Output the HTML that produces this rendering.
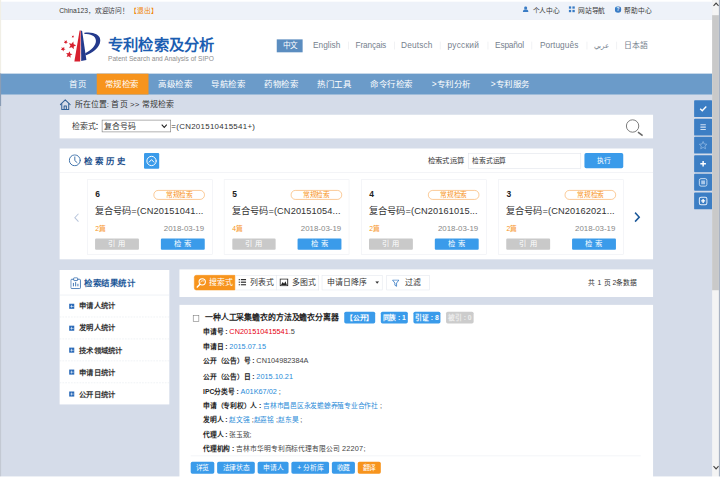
<!DOCTYPE html>
<html lang="zh-CN">
<head>
<meta charset="utf-8">
<title>专利检索及分析</title>
<style>
*{box-sizing:border-box;margin:0;padding:0}
html,body{width:720px;height:478px;overflow:hidden;background:#d5dce9}
body{font-family:"Liberation Sans",sans-serif;color:#333}
#stage{position:absolute;left:0;top:0;width:1280px;height:850px;transform:scale(0.5625);transform-origin:0 0;background:#d5dce9;overflow:hidden;font-size:14px}
.abs{position:absolute}
.t{position:absolute;white-space:nowrap}
#topbar{left:0;top:0;width:1266px;height:35px;background:#eef2f9;border-top:3px solid #fff}
#topbar .t{font-size:12px;line-height:20px;top:5.8px;color:#3a3a3a}
#header{left:0;top:35px;width:1266px;height:96px;background:#fff}
#title{left:192px;top:60.5px;font-size:27.2px;font-weight:bold;color:#1b5db1;line-height:36px}
#subtitle{left:192px;top:97px;font-size:11.75px;color:#8e8e8e;line-height:14px}
.lang{position:absolute;top:70px;font-size:14px;color:#76818e;white-space:nowrap;line-height:23px}
.lang.on{background:#5b8dc0;color:#fff;left:492.4px;top:69.5px;width:46px;height:23.4px;line-height:24.4px;text-align:center;font-size:13.5px}
.lsep{position:absolute;top:74px;width:1px;height:14px;background:#e6e8ec}
#nav{left:0;top:131px;width:1266px;height:36.5px;background:#6b9bc9}
#nav span{position:absolute;top:0;height:36.5px;line-height:36.5px;color:#fff;font-size:15px;white-space:nowrap}
#nav i{position:absolute;top:0;left:171.6px;width:92.8px;height:36.5px;background:#f7941d}
#crumb{left:132.6px;top:175px;font-size:14px;letter-spacing:0.3px;color:#333;line-height:22px}
#sbox{left:105.8px;top:204px;width:1055.4px;height:41.8px;background:#fff}
#hist{left:105.8px;top:263.8px;width:1055.4px;height:197.5px;background:#fff}
.card{position:absolute;top:54.9px;width:223.1px;height:134.7px;border:1px solid #eceef2;background:#fff}
.card .n{position:absolute;left:13.5px;top:16px;font-size:15px;font-weight:bold;color:#222;line-height:20px}
.card .pill{position:absolute;left:117.7px;top:18.6px;width:91px;height:16.4px;border:1px solid #f7a24a;border-radius:8.2px;color:#f7941d;font-size:12px;line-height:14.4px;text-align:center}
.card .q{position:absolute;left:13px;top:43.6px;font-size:16.4px;letter-spacing:0.2px;color:#333;white-space:nowrap;line-height:24px}
.card .c{position:absolute;left:13.5px;top:77.6px;font-size:12px;color:#f7941d;line-height:18px}
.card .d{position:absolute;right:14px;top:77.6px;font-size:14px;color:#888;line-height:18px}
.card .b1,.card .b2{position:absolute;top:103.9px;width:77.8px;height:20.9px;color:#fff;font-size:13px;line-height:20.9px;text-align:center;letter-spacing:5px;text-indent:5px;border-radius:2px}
.card .b1{left:13.2px;background:#c9c9c9}
.card .b2{left:130.1px;background:#3a9bea}
#side{left:105.6px;top:479.6px;width:195.2px;height:239.9px;background:#fff}
#side .h{position:absolute;left:0;top:0;width:195.2px;height:45.3px;border-bottom:1px solid #e3e7ee}
#side .h span{position:absolute;left:44.6px;top:12.5px;font-size:15px;font-weight:bold;color:#1e5a9a;white-space:nowrap;line-height:22px}
#side .it{position:absolute;left:0;width:195.2px;height:39.1px;border-bottom:1px dashed #e3e7ee}
#side .it i{position:absolute;left:17.8px;top:15px;width:9px;height:9px;background:#2a6ab8}
#side .it i:before{content:"";position:absolute;left:1.8px;top:3.9px;width:5.4px;height:1.2px;background:#fff}
#side .it i:after{content:"";position:absolute;left:3.9px;top:1.8px;width:1.2px;height:5.4px;background:#fff}
#side .it span{position:absolute;left:34.7px;top:9.5px;font-size:13px;font-weight:bold;color:#333;white-space:nowrap;line-height:20px}
#tool{left:318.8px;top:479.1px;width:842.4px;height:48.9px;background:#fff}
#tool .b{position:absolute;top:9.8px;height:27.4px;border:1px solid #e3e7ee;font-size:14px;line-height:25.4px;white-space:nowrap;color:#333}
#res{left:318.8px;top:541.7px;width:842.4px;height:320px;background:#fff}
.tag{position:absolute;top:12.4px;height:20.8px;line-height:20.8px;color:#fff;font-size:12px;font-weight:bold;background:#3a9bea;border-radius:3px;text-align:center;white-space:nowrap}
.row{position:absolute;left:42.3px;font-size:13px;color:#444;white-space:nowrap;line-height:26px}
.row b{font-weight:bold;color:#222;font-size:12px}
.row a{color:#2a8bd8;text-decoration:none}
.row a.c{font-size:12px}
.btn{position:absolute;top:279.6px;height:20.8px;line-height:20.8px;color:#fff;background:#3a9bea;border-radius:3px;font-size:12px;text-align:center;white-space:nowrap}
#float div{position:absolute;left:0;width:31.5px;height:30px;background:#3c7ec4;border-radius:1.5px}
#float svg{position:absolute;left:0;top:0}
#sbar{left:1265.8px;top:0;width:14.2px;height:850px;background:#f4f4f4}
</style>
</head>
<body>
<div id="stage">
<div class="abs" id="topbar">
  <div class="t" style="left:105.2px">China123，欢迎访问！ <span style="color:#f08300">【退出】</span></div>
  <svg class="abs" style="left:928.5px;top:8px" width="11" height="11" viewBox="0 0 11 11"><circle cx="5.5" cy="3" r="2.7" fill="#3a7cc5"/><path d="M0.5,10.5 C0.5,7 2.5,6 5.5,6 C8.5,6 10.5,7 10.5,10.5 Z" fill="#3a7cc5"/></svg>
  <div class="t" style="left:946.7px">个人中心</div>
  <svg class="abs" style="left:1011px;top:8px" width="11" height="11" viewBox="0 0 11 11" fill="#3a7cc5"><rect x="0" y="0" width="4.4" height="4.4"/><rect x="6.6" y="0" width="4.4" height="4.4"/><rect x="0" y="6.6" width="4.4" height="4.4"/><rect x="6.6" y="6.6" width="4.4" height="4.4"/></svg>
  <div class="t" style="left:1027.6px">网站导航</div>
  <svg class="abs" style="left:1093px;top:8px" width="11.5" height="11.5" viewBox="0 0 12 12"><circle cx="6" cy="6" r="6" fill="#3a7cc5"/><text x="6" y="9.3" font-size="9" font-weight="bold" fill="#fff" text-anchor="middle" font-family="Liberation Sans">?</text></svg>
  <div class="t" style="left:1109.8px">帮助中心</div>
</div>
<div class="abs" id="header"></div>
<svg class="abs" style="left:97.8px;top:44.4px" width="88.9" height="71.1" viewBox="0 0 598 478">
<g fill="#d7202f"><polygon points="217.8,126.0 218.3,137.7 229.0,142.6 218.0,146.7 216.7,158.3 209.4,149.2 197.9,151.5 204.4,141.7 198.6,131.5 209.9,134.6"/><polygon points="141.0,184.5 138.7,202.2 153.4,212.4 135.8,215.7 130.7,232.9 122.2,217.1 104.2,217.6 116.6,204.6 110.6,187.7 126.8,195.4"/><polygon points="217.4,201.6 221.8,234.4 252.9,245.5 223.1,259.8 222.2,292.8 199.4,268.9 167.7,278.2 183.4,249.1 164.7,221.9 197.3,227.8"/><polygon points="110.0,264.0 107.3,284.5 124.3,296.2 104.0,300.0 98.1,319.8 88.2,301.7 67.6,302.2 81.8,287.2 74.9,267.7 93.6,276.6"/><polygon points="174.1,316.6 180.3,344.2 207.6,351.3 183.3,365.7 185.0,393.9 163.8,375.2 137.5,385.5 148.7,359.6 130.8,337.8 158.9,340.4"/><polygon points="293,70 306,70 300,440 230,440"/></g>
<g fill="#243a8c"><polygon points="309,70 323,74 374,420 312,432"/>
<path d="M350,96 C440,80 545,110 540,190 C535,280 440,335 362,368 L360,342 C430,300 490,250 488,190 C486,130 420,110 350,110 Z"/></g></svg>
<div class="t" id="title">专利检索及分析</div>
<div class="t" id="subtitle">Patent Search and Analysis of SIPO</div>
<div class="lang on">中文</div>
<div class="lang" style="left:556.4px;font-size:14.8px;letter-spacing:0px">English</div>
<div class="lang" style="left:632px;font-size:14.8px;letter-spacing:-0.29px">Français</div>
<div class="lang" style="left:713.1px;font-size:14.8px;letter-spacing:0.22px">Deutsch</div>
<div class="lang" style="left:795.7px;font-size:14.8px;letter-spacing:0.43px">русский</div>
<div class="lang" style="left:880px;font-size:14.8px;letter-spacing:-0.28px">Español</div>
<div class="lang" style="left:959.8px;font-size:14.8px;letter-spacing:0.12px">Português</div>
<div class="lang" style="left:1055.5px;font-size:12px">عربي</div>
<div class="lang" style="left:1109.7px">日本語</div>
<div class="lsep" style="left:619.2px"></div><div class="lsep" style="left:700.8px"></div><div class="lsep" style="left:782.2px"></div><div class="lsep" style="left:866.5px"></div><div class="lsep" style="left:945.2px"></div><div class="lsep" style="left:1043px"></div><div class="lsep" style="left:1095.6px"></div>
<div class="abs" id="nav"><i></i>
  <span style="left:122.8px">首页</span>
  <span style="left:186.5px">常规检索</span>
  <span style="left:281.4px">高级检索</span>
  <span style="left:375.8px">导航检索</span>
  <span style="left:469.7px">药物检索</span>
  <span style="left:564.1px">热门工具</span>
  <span style="left:658.5px">命令行检索</span>
  <span style="left:767.6px">&gt;专利分析</span>
  <span style="left:872.4px">&gt;专利服务</span>
</div>
<svg class="abs" style="left:106px;top:175.5px" width="20" height="20" viewBox="0 0 20 20" fill="none" stroke="#2f5f96" stroke-width="1.8" stroke-linejoin="round" stroke-linecap="round"><path d="M1.2,10 L10,1.5 L18.8,10"/><path d="M3.8,8.5 V18.5 H16.2 V8.5"/><path d="M8,18.5 V12.5 H12 V18.5"/></svg>
<div class="t" id="crumb">所在位置: 首页 &gt;&gt; 常规检索</div>
<div class="abs" id="sbox">
  <div class="t" style="left:21.8px;top:10px;font-size:14px;line-height:22px">检索式：</div>
  <div class="abs" style="left:75.5px;top:9.2px;width:122.7px;height:21.5px;border:1px solid #767676;font-size:14px;line-height:20.5px;padding-left:3px;background:#fff;white-space:nowrap">复合号码</div>
  <svg class="abs" style="left:180px;top:15.5px" width="12" height="9" viewBox="0 0 12 9" fill="none" stroke="#222" stroke-width="1.8"><path d="M1.5,1.5 L6,6.5 L10.5,1.5"/></svg>
  <div class="t" style="left:198.8px;top:10px;font-size:14px;letter-spacing:0.55px;line-height:22px">=(CN201510415541+)</div>
  <svg class="abs" style="left:1000px;top:4px" width="50" height="36" viewBox="0 0 50 36" fill="none" stroke="#777" stroke-width="1.7"><circle cx="18.6" cy="16" r="11"/><path d="M28.2,26.8 L36.4,33.2" stroke-width="2.6" stroke="#666"/></svg>
</div>
<div class="abs" id="hist">
  <svg class="abs" style="left:16px;top:10.5px" width="22" height="22" viewBox="0 0 22 22" fill="none" stroke="#3a6ea8" stroke-width="1.7" stroke-linecap="round"><circle cx="11" cy="11" r="9.7"/><path d="M11,5 V11.5 L15,15"/></svg>
  <div class="t" style="left:43px;top:11.3px;font-size:15px;font-weight:bold;color:#1d4f8c;letter-spacing:5px;line-height:24px">检索历史</div>
  <div class="abs" style="left:150.7px;top:8.2px;width:26.7px;height:28.4px;background:#3a9bea;border-radius:2px"></div>
  <svg class="abs" style="left:150.7px;top:8.2px" width="26.7" height="28.4" viewBox="0 0 26.7 28.4" fill="none" stroke="#fff" stroke-width="1.7" stroke-linecap="round" stroke-linejoin="round"><circle cx="13.4" cy="14.2" r="8.3"/><path d="M9.2,16.2 L13.4,11.8 L17.6,16.2"/></svg>
  <div class="t" style="left:654.4px;top:12.4px;font-size:13px;line-height:20px;color:#333">检索式运算</div>
  <div class="abs" style="left:726.2px;top:8.6px;width:201px;height:27.7px;border:1px solid #dfe3ea;font-size:12px;line-height:25.7px;padding-left:7px;color:#333;white-space:nowrap">检索式运算</div>
  <div class="abs" style="left:933.1px;top:8.6px;width:69px;height:26.7px;background:#3a9bea;color:#fff;font-size:12px;line-height:26.7px;text-align:center;border-radius:3px">执行</div>
  <div class="abs" style="left:0;top:42.7px;width:1055.4px;height:1px;background:#e9ecf1"></div>
  <svg class="abs" style="left:24px;top:113px" width="12" height="20" viewBox="0 0 12 20" fill="none" stroke="#b9c6dc" stroke-width="1.8"><path d="M9.5,3 L3,10 L9.5,17"/></svg>
  <svg class="abs" style="left:1021.5px;top:112px" width="12" height="20" viewBox="0 0 12 20" fill="none" stroke="#1e5a9a" stroke-width="2.6"><path d="M2,2 L9.5,10 L2,18"/></svg>
  <div class="card" style="left:48.9px"><div class="n">6</div><div class="pill">常规检索</div><div class="q">复合号码=(CN20151041...</div><div class="c">2篇</div><div class="d">2018-03-19</div><div class="b1">引用</div><div class="b2">检索</div></div>
  <div class="card" style="left:292.6px"><div class="n">5</div><div class="pill">常规检索</div><div class="q">复合号码=(CN20151054...</div><div class="c">4篇</div><div class="d">2018-03-19</div><div class="b1">引用</div><div class="b2">检索</div></div>
  <div class="card" style="left:536.3px"><div class="n">4</div><div class="pill">常规检索</div><div class="q">复合号码=(CN20161015...</div><div class="c">2篇</div><div class="d">2018-03-19</div><div class="b1">引用</div><div class="b2">检索</div></div>
  <div class="card" style="left:780px"><div class="n">3</div><div class="pill">常规检索</div><div class="q">复合号码=(CN20162021...</div><div class="c">2篇</div><div class="d">2018-03-19</div><div class="b1">引用</div><div class="b2">检索</div></div>
</div>
<div class="abs" id="side">
  <div class="h">
    <svg class="abs" style="left:19px;top:13px" width="19" height="21" viewBox="0 0 19 21" fill="none" stroke="#2f6aad" stroke-width="1.5"><rect x="1" y="3.5" width="17" height="16.5" rx="1.5"/><rect x="6" y="0.8" width="7" height="5" rx="1" fill="#fff"/><path d="M5.5,16 V10 M9.5,16 V8.5 M13.5,16 V11.5" stroke-width="1.6"/></svg>
    <span>检索结果统计</span></div>
  <div class="it" style="top:45.3px"><i></i><span>申请人统计</span></div>
  <div class="it" style="top:84.4px"><i></i><span>发明人统计</span></div>
  <div class="it" style="top:123.5px"><i></i><span>技术领域统计</span></div>
  <div class="it" style="top:162.6px"><i></i><span>申请日统计</span></div>
  <div class="it" style="top:201.7px;border-bottom:none"><i></i><span>公开日统计</span></div>
</div>
<div class="abs" id="tool">
  <div class="b" style="left:26.3px;width:73.4px;background:#f7941d;border-color:#f7941d;color:#fff;padding-left:25.6px;border-radius:4px 0 0 4px">搜索式</div>
  <svg class="abs" style="left:30.5px;top:14.5px" width="18" height="18" viewBox="0 0 18 18" fill="none" stroke="#fff" stroke-width="1.9" stroke-linecap="round"><circle cx="10.5" cy="7" r="5.6"/><path d="M6.5,11.2 L1.6,16.4" stroke-width="2.6"/><path d="M7.5,7.6 C8.5,5.2 11,4.6 13,5.4" stroke-width="1.3"/></svg>
  <div class="b" style="left:99.7px;width:74px;padding-left:25.7px;border-left:none">列表式</div>
  <svg class="abs" style="left:105.4px;top:17.3px" width="13.5" height="11.5" viewBox="0 0 13.5 11.5" fill="#333"><rect x="0" y="0" width="2.4" height="2.2"/><rect x="4.2" y="0" width="9.3" height="2.2"/><rect x="0" y="4.6" width="2.4" height="2.2"/><rect x="4.2" y="4.6" width="9.3" height="2.2"/><rect x="0" y="9.2" width="2.4" height="2.2"/><rect x="4.2" y="9.2" width="9.3" height="2.2"/></svg>
  <div class="b" style="left:173.1px;width:74.7px;padding-left:27.1px;border-left:none">多图式</div>
  <svg class="abs" style="left:178.6px;top:16.4px" width="15.5" height="14" viewBox="0 0 15.5 14"><rect x="0.9" y="0.9" width="13.7" height="12.2" fill="#fff" stroke="#222" stroke-width="1.8"/><path d="M2.5,11.5 L5.5,6.5 L8,9.5 L10.5,5 L13,11.5 Z" fill="#222"/></svg>
  <div class="b" style="left:253.1px;width:107.7px;padding-left:9px">申请日降序</div>
  <svg class="abs" style="left:348.4px;top:21.3px" width="7" height="4.5" viewBox="0 0 7 4.5"><path d="M0,0 H7 L3.5,4.5 Z" fill="#333"/></svg>
  <div class="b" style="left:368.7px;width:76.4px;padding-left:31.1px">过滤</div>
  <svg class="abs" style="left:378.4px;top:17.6px" width="13" height="13" viewBox="0 0 13 13" fill="none" stroke="#3a7cc5" stroke-width="1.5" stroke-linejoin="round"><path d="M0.8,0.8 H12.2 L8,6.2 V12 L5,10 V6.2 Z"/></svg>
  <div class="t" style="left:727.4px;top:12.5px;font-size:12px;letter-spacing:0.35px;line-height:22px">共 1 页 2条数据</div>
</div>
<div class="abs" id="res">
  <div class="abs" style="left:23.8px;top:18.8px;width:11.7px;height:11.7px;border:1px solid #777;background:#fff"></div>
  <div class="t" style="left:45.6px;top:11.1px;font-family:'Liberation Serif',serif;font-size:14px;font-weight:bold;color:#222;line-height:24px">一种人工采集蟾衣的方法及蟾衣分离器</div>
  <div class="tag" style="left:293.5px;width:54.5px">【公开】</div>
  <div class="tag" style="left:358px;width:48.2px">同族 : 1</div>
  <div class="tag" style="left:416px;width:48.7px">引证 : 8</div>
  <div class="tag" style="left:474.1px;width:49.4px;background:#ccc;color:#ececec">被引 : 0</div>
  <div class="row" style="top:35.2px"><b>申请号 : </b><span style="color:#e60012">CN201510415541</span>.5</div>
  <div class="row" style="top:61.7px"><b>申请日 : </b><a>2015.07.15</a></div>
  <div class="row" style="top:87.7px"><b>公开（公告）号 : </b>CN104982384A</div>
  <div class="row" style="top:115.8px"><b>公开（公告）日 : </b><a>2015.10.21</a></div>
  <div class="row" style="top:141.6px"><b>IPC分类号 : </b><a>A01K67/02</a> ;</div>
  <div class="row" style="top:166.0px"><b>申请（专利权）人 : </b><a class="c">吉林市昌邑区永发蟾蜍养殖专业合作社</a> ;</div>
  <div class="row" style="top:192.6px"><b>发明人 : </b><a class="c">赵文强</a> ;<a class="c">赵嘉铭</a> ;<a class="c">赵东昊</a> ;</div>
  <div class="row" style="top:217.5px"><b>代理人 : </b><span style="font-size:12px">张玉致;</span></div>
  <div class="row" style="top:243.3px"><b>代理机构 : </b><span style="font-size:12px;letter-spacing:0.3px">吉林市华明专利商标代理有限公司</span> <span style="letter-spacing:0.4px">22207;</span></div>
  <div class="abs" style="left:20px;top:268.3px;width:800px;height:1px;background:#e9ecf1"></div>
  <div class="btn" style="left:20.4px;width:41.6px">详览</div>
  <div class="btn" style="left:67.2px;width:67.4px">法律状态</div>
  <div class="btn" style="left:139.7px;width:54.4px">申请人</div>
  <div class="btn" style="left:199.2px;width:67.4px">+ 分析库</div>
  <div class="btn" style="left:270.9px;width:41.5px">收藏</div>
  <div class="btn" style="left:316.9px;width:41.6px;background:#f7941d">翻译</div>
</div>
<div class="abs" id="float" style="left:1234.3px;top:178px;width:32px;height:200px">
  <div style="top:0"><svg width="31.5" height="30" viewBox="0 0 31.5 30" fill="none" stroke="#fff" stroke-width="2.4"><path d="M10.8,15.4 L14.5,19 L21.6,11.4"/></svg></div>
  <div style="top:32.9px"><svg width="31.5" height="30" viewBox="0 0 31.5 30" fill="none" stroke="#cfe0f3" stroke-width="1.8"><path d="M11.2,10.8 H20.8 M11.2,15 H20.8 M11.2,19.2 H20.8"/></svg></div>
  <div style="top:65.3px"><svg width="31.5" height="30" viewBox="0 0 31.5 30" fill="none" stroke="#8fb8e3" stroke-width="1.4" stroke-linejoin="round"><path d="M16,8.5 L18,13 L22.8,13.5 L19.2,16.7 L20.3,21.5 L16,19 L11.7,21.5 L12.8,16.7 L9.2,13.5 L14,13 Z"/></svg></div>
  <div style="top:98px"><svg width="31.5" height="30" viewBox="0 0 31.5 30" fill="none" stroke="#fff" stroke-width="2.6"><path d="M11,15 H21 M16,10 V20"/></svg></div>
  <div style="top:131.3px"><svg width="31.5" height="30" viewBox="0 0 31.5 30" fill="none" stroke="#d5e4f5" stroke-width="1.6"><rect x="9.3" y="8.5" width="13.4" height="13.4" rx="3"/><rect x="12.6" y="11.8" width="6.8" height="6.8" fill="#a9c8ea" stroke="none"/></svg></div>
  <div style="top:163.5px"><svg width="31.5" height="30" viewBox="0 0 31.5 30" fill="none" stroke="#e3eefa" stroke-width="1.8"><rect x="9.3" y="8.5" width="13.4" height="13.4" rx="3"/><path d="M12.5,15.2 H19.5 M16,11.7 V18.7" stroke="#fff" stroke-width="2.4"/></svg></div>
</div>
<div class="abs" id="sbar">
  <div class="abs" style="left:0;top:27px;width:12.2px;height:488.5px;background:#c9c9c9"></div>
  <svg class="abs" style="left:1px;top:3px" width="12" height="10" viewBox="0 0 12 10" fill="none" stroke="#444" stroke-width="2"><path d="M1.5,7.5 L6,2.5 L10.5,7.5"/></svg>
  <svg class="abs" style="left:1px;top:826px" width="12" height="10" viewBox="0 0 12 10" fill="none" stroke="#444" stroke-width="2"><path d="M1.5,2.5 L6,7.5 L10.5,2.5"/></svg>
  <div class="abs" style="left:12.2px;top:0;width:2px;height:850px;background:#a9b3c3"></div>
</div>
<div class="abs" style="left:0;top:0;width:2.2px;height:850px;background:linear-gradient(#f1efe6 0,#f1efe6 130px,#8a9db5 131px,#8a9db5 188px,#c3c9d3 189px,#c3c9d3 100%)"></div>
<div class="abs" style="left:0;top:847px;width:1280px;height:3px;background:#fff"></div>
</div>
</body>
</html>
